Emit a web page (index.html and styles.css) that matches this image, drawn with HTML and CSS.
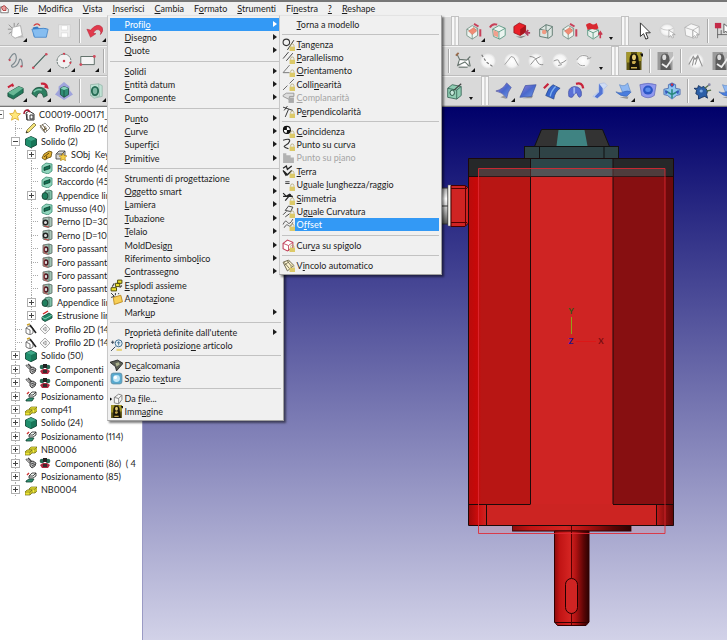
FILE: index.html
```html
<!DOCTYPE html>
<html lang="it">
<head>
    <meta charset="UTF-8">
    <meta name="viewport" content="width=device-width, initial-scale=1.0">
    <title>Modellatore</title>
    <link rel="stylesheet" href="styles.css">
</head>
<body>
    <!-- icon library -->
    <svg class="defs" aria-hidden="true">
        <defs>
            <linearGradient id="gBlue" x1="0" y1="0" x2="1" y2="1"><stop offset="0" stop-color="#9a7fd8"/><stop offset=".5" stop-color="#4a68cc"/><stop offset="1" stop-color="#6f9ce8"/></linearGradient>
            <radialGradient id="gPale"><stop offset="0" stop-color="#fff"/><stop offset=".7" stop-color="#f4f4f4"/><stop offset="1" stop-color="#d9d9d9"/></radialGradient>
        </defs>

        <!-- small icons, 12 x 12 -->
        <symbol id="app" viewBox="0 0 12 12"><path d="M1 3h6l4 3v5H1z" fill="#fff" stroke="#555"/><path d="M2 4q4-5 6 0v4H4z" fill="#e7a0a0" stroke="#a22"/></symbol>
        <symbol id="star" viewBox="0 0 12 12"><path d="M6 .8l1.6 3.5 3.9.4-2.9 2.6.9 3.9L6 9.2l-3.5 2 .9-3.9L.5 4.7l3.9-.4z" fill="#ffe77a" stroke="#d9a92c" stroke-width=".8"/></symbol>
        <symbol id="model" viewBox="0 0 12 12"><path d="M3 4l3-2 5 3v6H4z" fill="#fff" stroke="#333"/><path d="M4 5v6M7 6v4h3V6z" fill="none" stroke="#333"/><path d="M1 5Q1 1 5 1l2 2" fill="none" stroke="#a01830" stroke-width="1.5"/></symbol>
        <symbol id="pencil" viewBox="0 0 12 12"><path d="M1 11l1-3 7-7 2 2-7 7z" fill="#f4e37a" stroke="#77703a" stroke-width=".8"/><path d="M1 11l.6-2 1.4 1.4z" fill="#222"/></symbol>
        <symbol id="plane" viewBox="0 0 12 12"><path d="M1 5l5-4 5 5-5 5z" fill="#fff" stroke="#777" stroke-width=".8"/><path d="M1 3l5 7M3 2l5 7M6 4v4H4l4-2" fill="none" stroke="#6a5a3a" stroke-width=".9"/></symbol>
        <symbol id="diamond" viewBox="0 0 12 12"><path d="M1 6l5-5 5 5-5 5z" fill="#f6f6f6" stroke="#999" stroke-width=".8"/><path d="M4 6l3-2v4z" fill="none" stroke="#888" stroke-width=".8"/></symbol>
        <symbol id="wand" viewBox="0 0 12 12"><path d="M1 5l3-2 4 2v5l-3 2-4-2z" fill="#fff" stroke="#555" stroke-width=".8"/><path d="M1 5l4 2v5" fill="none" stroke="#555" stroke-width=".8"/><path d="M5 2l6 8" stroke="#222" stroke-width="1.6"/><path d="M2 2l3-1" stroke="#caa02c" stroke-width="1.4"/></symbol>
        <symbol id="solid" viewBox="0 0 12 12"><path d="M6 .5l5.500 2.500v6L6 11.700.500 9V3z" fill="#187658" stroke="#0a3d2d" stroke-width=".8"/><path d="M1 3l5 2 5-2-5-2.300z" fill="#3da888"/><path d="M6 5v6.500l-5-2.500V3z" fill="#1f8d6b"/></symbol>
        <symbol id="fillet" viewBox="0 0 12 12"><path d="M1 4l4-3 6 1v7l-4 3-6-2z" fill="#8fd6bd" stroke="#3c8a71" stroke-width=".8"/><path d="M3 8.500V5.500l6-2v3z" fill="#137556" stroke="#0b3b2b" stroke-width=".8"/></symbol>
        <symbol id="boss" viewBox="0 0 12 12"><path d="M4 2l4-1 3 1v8l-4 1-3-1z" fill="#7fbfa8" stroke="#376a58" stroke-width=".8"/><ellipse cx="4" cy="7" rx="3" ry="3.500" fill="#20805f" stroke="#17382c" stroke-width=".8"/><path d="M8 3v8" stroke="#376a58" stroke-width=".8"/></symbol>
        <symbol id="pin" viewBox="0 0 12 12"><path d="M2 2l6-1 3 1v8l-4 1.500L2 10z" fill="#a9c4b8" stroke="#56645e" stroke-width=".8"/><path d="M8 1v10" stroke="#56645e" stroke-width=".7"/><circle cx="4.500" cy="6.500" r="2.200" fill="#ddd" stroke="#222" stroke-width="1.400"/><path d="M3 10l5 1" stroke="#c33" stroke-width=".8"/></symbol>
        <symbol id="hole" viewBox="0 0 12 12"><path d="M2 2l6-1 3 1v8l-4 1.500L2 10z" fill="#9fc2b3" stroke="#56645e" stroke-width=".8"/><path d="M8 1v10" stroke="#56645e" stroke-width=".7"/><ellipse cx="5" cy="6.500" rx="1.800" ry="2.500" fill="#ddd" stroke="#4a1620" stroke-width="1.400"/><path d="M3 2v8l4 1" fill="none" stroke="#c55" stroke-width=".8"/></symbol>
        <symbol id="extrude" viewBox="0 0 12 12"><path d="M1 7l7-4 3 2v3l-7 3.500-3-2z" fill="#1f8a68" stroke="#0b3b2b" stroke-width=".8"/><path d="M1 7l3 2 7-4" fill="none" stroke="#9fe0c8" stroke-width=".8"/><path d="M2 4l5-3" stroke="#c22" stroke-width="1.400"/></symbol>
        <symbol id="gold" viewBox="0 0 12 12"><path d="M1 9l2-4 5-3 3 1-1 5-3 1-3 2z" fill="#e2b235" stroke="#5e4508" stroke-width=".8"/><path d="M3 8l5-4M5 10l1-3" stroke="#5e4508"/></symbol>
        <symbol id="smart" viewBox="0 0 12 12"><path d="M1 5l3-3h6v5l-3 3H1z" fill="#d8d8d8" stroke="#333" stroke-width=".8"/><path d="M2 5h5l3-3M7 5v4" fill="none" stroke="#333" stroke-width=".8"/><path d="M8 4l1 2.500 3 .3-2 2 .6 3L8 10.300l-2.500 1.500.6-3-2-2 3-.3z" fill="#f5d04a" stroke="#a87a10" stroke-width=".6"/></symbol>
        <symbol id="asm" viewBox="0 0 12 12"><path d="M1 2l4 4M3 1l4 4" stroke="#444" stroke-width="1.600"/><path d="M1.500 2.500l4 4" stroke="#ddd" stroke-width=".7"/><path d="M5 5l3-1 3 2-1 3-3 2-2-2z" fill="#b5b5b5" stroke="#333" stroke-width=".9"/><path d="M6 7l3-1M7 9l3-2" stroke="#333" stroke-width=".8"/></symbol>
        <symbol id="comp" viewBox="0 0 12 12"><circle cx="3" cy="4" r="2.300" fill="#2a6a55"/><circle cx="9" cy="4" r="2.300" fill="#2a6a55"/><rect x="4" y="1" width="4" height="4" fill="#222"/><path d="M1 8l3-2h4l3 2-2 3H3z" fill="#b02840"/><path d="M4 7h4v3H4z" fill="#3b2a2c"/></symbol>
        <symbol id="posit" viewBox="0 0 12 12"><path d="M4 5l3-3h4v3L8 7H4z" fill="#eef3f0" stroke="#222" stroke-width=".8"/><path d="M4 5h4l3-3" fill="none" stroke="#222" stroke-width=".8"/><path d="M1 10l3-2h5l-2 3H1z" fill="#2f9575" stroke="#113f30" stroke-width=".8"/><path d="M2 4l2-2" stroke="#c33" stroke-width="1.400"/></symbol>
        <symbol id="yellow" viewBox="0 0 12 12"><path d="M4 5l2-2h6v4l-2 2H4z" fill="#f6ee3c" stroke="#6e6a14" stroke-width=".7"/><path d="M0 8l2-2h5v3l-2 2H0z" fill="#efe634" stroke="#6e6a14" stroke-width=".7"/><path d="M4 5h6l2-2M10 5v4M0 8h5l2-2M5 8v3" fill="none" stroke="#6e6a14" stroke-width=".7"/></symbol>
        <symbol id="explode" viewBox="0 0 12 12"><path d="M1 8h5v3H1zM5 4h4v3H5zM7 1h4v3H7z" fill="#e9df2e" stroke="#4f4a0a" stroke-width=".9"/><path d="M2 7l2-3M9 8l2-2" stroke="#444"/></symbol>
        <symbol id="note" viewBox="0 0 12 12"><path d="M3 5l7-2 1.500 6L4 11.500z" fill="#f8cf56" stroke="#b8871c" stroke-width=".8"/><path d="M1 1l3 3M1 5l3-1M5 1v2M8 1v1" stroke="#333" stroke-width=".9"/></symbol>
        <symbol id="props" viewBox="0 0 12 12"><path d="M1 3h3M2.500 1.500v3M1 11l4-4" stroke="#345" stroke-width=".9"/><circle cx="8" cy="4" r="3.200" fill="#eaf4fb" stroke="#3d6d8e" stroke-width=".9"/><path d="M8 2v4M6.500 3.500h3" stroke="#3d6d8e" stroke-width=".8"/><path d="M6 9h5v2H6z" fill="#e6d27a"/></symbol>
        <symbol id="decal" viewBox="0 0 12 12"><path d="M0 3l7-2 5 3-6 7-1-4z" fill="#5c5f55" stroke="#222" stroke-width=".8"/><path d="M5 4l3-1 1 2-3 2z" fill="#aab08c"/></symbol>
        <symbol id="texture" viewBox="0 0 12 12"><rect x="1" y="1" width="10" height="10" rx="2" fill="#58a9cf" stroke="#5f8ea5" stroke-width=".8"/><circle cx="6" cy="6" r="3.200" fill="#bfe6f7"/><circle cx="5" cy="5" r="1.500" fill="#fff"/></symbol>
        <symbol id="fromfile" viewBox="0 0 12 12"><path d="M0 5l2 1.500L0 8z" fill="#000"/><path d="M4 5l4-3 3 1v4l-3 4-4-1zM4 5l4 1 3-3M8 6v5" fill="#f8f8f8" stroke="#777" stroke-width=".8"/></symbol>
        <symbol id="mona" viewBox="0 0 12 12"><path d="M1 0h10v12H1z" fill="#5d5412"/><path d="M1 0h3v7H1zM8 0h3v6H8z" fill="#a3962a"/><path d="M3 12V5q0-4 3-4t3 4l1 7z" fill="#181408"/><ellipse cx="6" cy="3.500" rx="1.300" ry="1.900" fill="#e5cc74"/><path d="M4.500 6.500q1.500-1.500 3 0l-1 1.500H5zM4 10h4v1H4z" fill="#c9ab4e"/><path d="M10 1h2v2h-1z" fill="#111"/></symbol>
        <symbol id="monag" viewBox="0 0 12 12"><path d="M1 0h10v12H1z" fill="#9a9a9a"/><path d="M8 0h3v6H8z" fill="#bcbcbc"/><path d="M3 12V5q0-4 3-4t3 4l1 7z" fill="#5c5c5c"/><ellipse cx="5.500" cy="3.500" rx="1.300" ry="1.900" fill="#ddd"/><path d="M4 8l3 2 5-7" fill="none" stroke="#ededed" stroke-width="1.200"/></symbol>

        <!-- constraint icons, 12 x 12, with the small lock -->
        <symbol id="lock" viewBox="0 0 12 12"><path d="M8 8V7q0-1.500 1.500-1.500T11 7v1" fill="none" stroke="#b6ab78" stroke-width=".8"/><rect x="7" y="8" width="5" height="4" fill="#dcc968"/></symbol>
        <symbol id="tang" viewBox="0 0 12 12"><circle cx="4" cy="4" r="3" fill="none" stroke="#333"/><path d="M5 11l6-9" stroke="#333" stroke-width=".9"/><use href="#lock"/></symbol>
        <symbol id="para" viewBox="0 0 12 12"><path d="M1 7l5-6M4 9l6-7" stroke="#444" stroke-width=".9"/><use href="#lock"/></symbol>
        <symbol id="orient" viewBox="0 0 12 12"><path d="M7 1L1 8h6" fill="none" stroke="#777" stroke-width=".9"/><use href="#lock"/></symbol>
        <symbol id="colli" viewBox="0 0 12 12"><path d="M1 11l4-4M7 5l4-4" stroke="#666" stroke-width=".9"/><use href="#lock"/></symbol>
        <symbol id="compl" viewBox="0 0 12 12"><path d="M1 4l3-2h7v3H7v3L1 5z" fill="#ddd" stroke="#999" stroke-width=".9"/><rect x="6" y="6" width="5" height="5" fill="#aaa"/></symbol>
        <symbol id="perp" viewBox="0 0 12 12"><path d="M1 2l9 3M6 4l-3 7M2 5l3-4" fill="none" stroke="#333" stroke-width=".9"/><use href="#lock"/></symbol>
        <symbol id="coin" viewBox="0 0 12 12"><circle cx="4.500" cy="4.500" r="3.200" fill="#fff" stroke="#111"/><path d="M4.500 1v7A3.500 3.500 0 0 0 8 4.500H1A3.500 3.500 0 0 1 4.500 1z" fill="#111"/><use href="#lock"/></symbol>
        <symbol id="ptcurve" viewBox="0 0 12 12"><path d="M1 2q7-2 6 1T3 7t3 3" fill="none" stroke="#333"/><use href="#lock"/></symbol>
        <symbol id="ptplane" viewBox="0 0 12 12"><path d="M1 2h3v2h4v2h3v5H1z" fill="#b2b2b2"/></symbol>
        <symbol id="ground" viewBox="0 0 12 12"><path d="M1 3l3-2 1 3 4-3M2 6l3 3 4-4M1 5l3 5" fill="none" stroke="#222" stroke-width="1.200"/><use href="#lock"/></symbol>
        <symbol id="equal" viewBox="0 0 12 12"><path d="M3 3.500h4M3 5h4" stroke="#444"/><use href="#lock"/></symbol>
        <symbol id="symm" viewBox="0 0 12 12"><path d="M1 1l3 3 3-2 3 3M3 8l5-6M1 4h9" fill="none" stroke="#222" stroke-width="1.100"/><use href="#lock"/></symbol>
        <symbol id="curv" viewBox="0 0 12 12"><path d="M3 5l3-4 4 1-2 4zM1 9l3-3M3 11l4-3" fill="none" stroke="#444" stroke-width=".9"/><use href="#lock"/></symbol>
        <symbol id="offs" viewBox="0 0 12 12"><path d="M0 0h12v12H0z" fill="#eee"/><path d="M1 6q2-5 4-2t5-3M2 9q2-4 4-2t4-3" fill="none" stroke="#555" stroke-width=".9"/><use href="#lock"/></symbol>
        <symbol id="edge" viewBox="0 0 12 12"><path d="M1 4l4-3 5 2v5l-5 3-4-2z" fill="#fff" stroke="#c0405a"/><path d="M1 4l5 2v5M6 6l4-3" fill="none" stroke="#c0405a" stroke-width=".8"/><use href="#lock"/></symbol>
        <symbol id="auto" viewBox="0 0 12 12"><path d="M1 3l5-2 5 5-6 5z" fill="#fdf4cf" stroke="#6d6850" stroke-width=".9"/><path d="M2 3l5 6M5 2l4 5M2 6l5-4" stroke="#6d6850" stroke-width=".8"/><use href="#lock"/></symbol>

        <!-- toolbar icons, 20 x 20 -->
        <symbol id="t-new" viewBox="0 0 20 20"><path d="M6 6l9-2 2 11-8 3-4-3z" fill="#fff" stroke="#999" stroke-width=".8"/><path d="M2 3l4 4M8 1v4M1 8h4M2 13l3-2M13 1l-2 3" stroke="#777" stroke-width=".8"/><path d="M8 18l9-3 2 2z" fill="#bbb"/></symbol>
        <symbol id="t-open" viewBox="0 0 20 20"><path d="M2 6l5-1 2 2h8v9H3z" fill="#2f78c4"/><path d="M1 8l13-1 5 1-2 9H4z" fill="#86bdf0" stroke="#3a7fc6" stroke-width=".8"/><path d="M3 4q4-4 7 0" fill="none" stroke="#d33a3a" stroke-width="1.300"/></symbol>
        <symbol id="t-save" viewBox="0 0 20 20"><path d="M4 3h13v14H4z" fill="#efefef" stroke="#cfcfcf"/><path d="M7 4h7v5H7zM7 12h7v5H7z" fill="#fff" stroke="#d5d5d5" stroke-width=".7"/></symbol>
        <symbol id="t-undo" viewBox="0 0 20 20"><path d="M1 8l4 9 6-4-3-1q4-6 8-2 1 2 0 4 4-4 2-8-5-6-13 3z" fill="#e23a4c" stroke="#b0263a" stroke-width=".6"/></symbol>
        <symbol id="t-curve" viewBox="0 0 20 20"><path d="M2 9q6-11 8-5T5 15q0 3 4 1t5-8q3-1 3 8" fill="none" stroke="#7e8a90" stroke-width="1.300"/><circle cx="3" cy="9" r="1.200" fill="#c54a5a"/><circle cx="16" cy="16" r="1.200" fill="#c54a5a"/></symbol>
        <symbol id="t-line" viewBox="0 0 20 20"><path d="M2 18L17 2" stroke="#3f6158" stroke-width="1.200"/><circle cx="2.500" cy="17.500" r="1.400" fill="#d04a5c"/><circle cx="17" cy="2.500" r="1.400" fill="#d04a5c"/></symbol>
        <symbol id="t-circle" viewBox="0 0 20 20"><circle cx="10" cy="10" r="7.700" fill="#f1f1f1" stroke="#5f6d6a" stroke-dasharray="3 1"/><circle cx="10" cy="10" r="1.400" fill="#d0384c"/><circle cx="10" cy="2" r="1.200" fill="#d0384c"/><circle cx="17" cy="12" r="1.200" fill="#d0384c"/></symbol>
        <symbol id="t-rect" viewBox="0 0 20 20"><path d="M2 5h15v9H2z" fill="#f4f4f4" stroke="#55655f"/><circle cx="2" cy="14" r="1.600" fill="#d04a5c"/><circle cx="17" cy="5" r="1.600" fill="#d04a5c"/></symbol>
        <symbol id="t-extr" viewBox="0 0 20 20"><path d="M1 12L13 5l5 2v5L7 19l-6-3z" fill="#24795c" stroke="#12402f" stroke-width=".8"/><path d="M1 12l6 3L18 7l-5-2z" fill="#68b795"/><path d="M1 6l5-3 1 2" fill="none" stroke="#c8233a" stroke-width="2.200"/></symbol>
        <symbol id="t-rev" viewBox="0 0 20 20"><path d="M1 13Q3 5 11 6q7 1 7 9l-4 2q-1-5-4-5t-4 5z" fill="#2d7f61" stroke="#12402f" stroke-width=".8"/><path d="M3 11q4-4 9-2" fill="none" stroke="#83ccb0" stroke-width="1.500"/><path d="M11 2q6-1 7 4l-3-1" fill="none" stroke="#c8233a" stroke-width="2.400"/></symbol>
        <symbol id="t-cube" viewBox="0 0 20 20"><path d="M10 0l6 5v4l4 5-7 4-3 2-3-2-7-4 4-5V5z" fill="#9095dc" opacity=".8"/><path d="M6 7l4-2 5 2v7l-5 3-4-3z" fill="#2f8d76" stroke="#12402f" stroke-width=".8"/><path d="M6 7l4 2 5-2-5-2z" fill="#8bd3bd"/><path d="M10 9v8" stroke="#12402f" stroke-width=".8"/></symbol>
        <symbol id="t-hole" viewBox="0 0 20 20"><path d="M5 3l9-1 4 2v12l-9 2-4-3z" fill="#bfe2d4" stroke="#8fb0a4" stroke-width=".8"/><path d="M14 2l1 14M5 15l10 1" fill="none" stroke="#8fb0a4" stroke-width=".8"/><ellipse cx="10" cy="10" rx="3.500" ry="4.500" fill="#7fb8a4" stroke="#256a52" stroke-width="2"/></symbol>
        <symbol id="t-wire" viewBox="0 0 20 20"><path d="M2 8l6-4 6 3v8l-6 4-6-4z" fill="#eef5f1" stroke="#6e8c80" stroke-width=".9"/><path d="M2 8l6 3 6-4M8 11v8" fill="none" stroke="#6e8c80" stroke-width=".9"/><path d="M4 10l6-4 3 4-5 4z" fill="#f08c74" stroke="#d0705c" stroke-width=".6"/><path d="M10 2l5 3M17 8v8" stroke="#c8405a" stroke-width="2.200"/></symbol>
        <symbol id="t-shell" viewBox="0 0 20 20"><path d="M4 8l7-4 7 3v8l-6 4-7-3z" fill="#eaf4ef" stroke="#4d8f78" stroke-width=".9"/><path d="M4 8l7 3 7-4M11 11v8" fill="none" stroke="#4d8f78" stroke-width=".9"/><path d="M5 9l5 2v6l-5-2z" fill="#f0a08e"/><path d="M1 6q3-5 8-3" fill="none" stroke="#c84058" stroke-width="2.200"/></symbol>
        <symbol id="t-red" viewBox="0 0 20 20"><path d="M1 5l6-4 7 3v7l-6 4-7-3z" fill="#ea2028" stroke="#8d1016" stroke-width=".8"/><path d="M8 8v7l6-4V4z" fill="#a8141c"/><path d="M3 16l6 2 6-3-7 1z" fill="#888"/><path d="M19 12h-5M17 9l-3 3 3 3" fill="none" stroke="#b33a5c" stroke-width="1.900"/></symbol>
        <symbol id="t-box" viewBox="0 0 20 20"><path d="M3 8l7-5 7 2v10l-4 3-10-2z" fill="#dce5e1" stroke="#4d6b60" stroke-width=".9"/><path d="M3 8l9 2 5-5M12 10v8M10 3v9" fill="none" stroke="#4d6b60" stroke-width=".9"/><circle cx="8" cy="11" r="2.500" fill="#f09a82"/></symbol>
        <symbol id="t-top" viewBox="0 0 20 20"><path d="M3 9l6-2 6 2v6l-6 4-6-4z" fill="#e9f1ed" stroke="#4d8f78" stroke-width=".9"/><path d="M3 9l6 3 6-3M9 12v6" fill="none" stroke="#4d8f78" stroke-width=".9"/><path d="M1 3q4-3 6-1t6-1l2 6q-3 2-6 1T3 9z" fill="#d92a32"/><path d="M17 18v-6M15 14l2-3 2 3" fill="none" stroke="#c83a50" stroke-width="1.800"/></symbol>
        <symbol id="t-arrow" viewBox="0 0 20 20"><path d="M6 1v15l3.500-3 2.500 6 2.500-1-2.500-6H17z" fill="#fff" stroke="#333" stroke-width="1.100"/></symbol>
        <symbol id="t-ball" viewBox="0 0 20 20"><ellipse cx="9" cy="9" rx="8" ry="7" fill="url(#gPale)" stroke="#ccc" stroke-width=".6"/><path d="M2 7q7 4 14 0" fill="none" stroke="#c6c6c6"/><path d="M11 9v8l2-2 2 3 1-1-1-3h3z" fill="#fff" stroke="#999" stroke-width=".8"/></symbol>
        <symbol id="t-gcube" viewBox="0 0 20 20"><path d="M2 6l7-4 9 3v9l-6 4-9-3z" fill="#f7f7f7" stroke="#aaa" stroke-width=".8"/><path d="M2 6l9 3 7-4M11 9v9" fill="none" stroke="#aaa" stroke-width=".8"/><path d="M11 9v8l2-2 2 3 1-1-1-3h3z" fill="#fff" stroke="#999" stroke-width=".8"/></symbol>
        <symbol id="t-flag" viewBox="0 0 20 20"><path d="M4 4v14M4 14h12M8 9v5" stroke="#555" stroke-width=".9"/><path d="M1 1h7v6H1z" fill="#c42a48"/><path d="M11 2v10l2-2 3 4V6z" fill="#fff" stroke="#444" stroke-width=".9"/></symbol>
        <symbol id="t-sketch" viewBox="0 0 20 20"><path d="M3 8q4 4 14-1l-4 9-7-1z" fill="#fff"/><path d="M2 2l3 6 8 1 4-4M5 8l-2 7 8-4 5 5M4 17h10M15 7l2 9" fill="none" stroke="#68756f" stroke-width="1.200"/><path d="M1 4l3-3" stroke="#9a6a4a" stroke-width="2"/></symbol>
        <symbol id="t-p1" viewBox="0 0 20 20"><circle cx="10" cy="10" r="9" fill="url(#gPale)"/><path d="M3 3l5 8 7 5" fill="none" stroke="#777" stroke-width="1.300" stroke-dasharray="3 2"/></symbol>
        <symbol id="t-p2" viewBox="0 0 20 20"><circle cx="10" cy="10" r="9" fill="url(#gPale)"/><path d="M2 14l7-9 3 1 5 9" fill="none" stroke="#999"/></symbol>
        <symbol id="t-p3" viewBox="0 0 20 20"><circle cx="10" cy="10" r="9" fill="url(#gPale)"/><path d="M3 5q6 0 8 5t7 4M4 14l5-6 6-3" fill="none" stroke="#888"/></symbol>
        <symbol id="t-p4" viewBox="0 0 20 20"><circle cx="10" cy="10" r="9" fill="url(#gPale)"/><path d="M3 10q6-3 6 1t8-2M8 15l4-1" fill="none" stroke="#888"/></symbol>
        <symbol id="t-p5" viewBox="0 0 20 20"><circle cx="9" cy="10" r="8" fill="url(#gPale)"/><path d="M2 9q3-6 9-5 5 1 3 3t4-1M3 12q2 4 8 3" fill="none" stroke="#999"/></symbol>
        <symbol id="t-gcut" viewBox="0 0 20 20"><circle cx="10" cy="10" r="9" fill="url(#gPale)"/><path d="M2 14l5-9 2 3 3-4 5 12M8 6L6 15M12 5L9 14" fill="none" stroke="#909090" stroke-width="1.200"/></symbol>
        <symbol id="t-gbox" viewBox="0 0 20 20"><path d="M3 7l5-4 10 2v10l-5 4-10-2z" fill="#8fccb2" stroke="#3c6a5a"/><path d="M3 7l10 2 5-4M13 9v10" fill="none" stroke="#3c6a5a"/><ellipse cx="8" cy="12" rx="2.500" ry="3" fill="#c6e8da" stroke="#1f4a3a"/><path d="M10 9l8-7" stroke="#444" stroke-width="1.400"/></symbol>
        <symbol id="t-s1" viewBox="0 0 20 20"><path d="M6 17l7 2-3-4z" fill="#999"/><path d="M1 10Q9 8 13 1l5 5q-4 5-5 12Q8 11 1 10z" fill="url(#gBlue)" stroke="#4b50a0" stroke-width=".7"/></symbol>
        <symbol id="t-s2" viewBox="0 0 20 20"><path d="M4 18h10l2-3z" fill="#999"/><path d="M7 4l12-1-5 13-13 1z" fill="url(#gBlue)" stroke="#394f9e" stroke-width=".7"/></symbol>
        <symbol id="t-s3" viewBox="0 0 20 20"><path d="M3 15Q6 6 11 3l8 4q-6 4-7 12z" fill="#3867cd" stroke="#21427f" stroke-width=".7"/><path d="M8 16q1-6 6-11" fill="none" stroke="#7fb0ee" stroke-width="1.500"/><path d="M1 7l5-5" stroke="#c8233a" stroke-width="2.500"/></symbol>
        <symbol id="t-s4" viewBox="0 0 20 20"><path d="M2 16Q0 6 8 5q9 0 8 10-2 4-4 0-1-5-4-1-2 5-6 2z" fill="#5b70d6" stroke="#3b4a9c" stroke-width=".7"/><path d="M8 6v7" stroke="#a2b8f0" stroke-width="2"/><path d="M10 2q7-2 8 5" fill="none" stroke="#c8233a" stroke-width="2.600"/></symbol>
        <symbol id="t-s5" viewBox="0 0 20 20"><path d="M9 2l6-1 3 3-4 4v4l-7 6-5-2 6-5z" fill="#cfdcf4" stroke="#a9bce4" stroke-width=".7"/><path d="M9 2l4 5v6l-6 5-3-2 5-5z" fill="#5274d4"/></symbol>
        <symbol id="t-s6" viewBox="0 0 20 20"><path d="M5 3q6 3 9-2l3 9-8 3z" fill="#8fb8f2" stroke="#5b87c8" stroke-width=".7"/><path d="M1 11q5 2 8 0 5-2 9 0l-5 5q-7 0-12-5z" fill="#4a7ddd" stroke="#3560b0" stroke-width=".6"/><path d="M5 17l9 2 1-3z" fill="#999"/></symbol>
        <symbol id="t-s7" viewBox="0 0 20 20"><path d="M1 3q9-3 18 0l-2 12q-7 5-14 0z" fill="#8f98ee" stroke="#6168b8" stroke-width=".8"/><ellipse cx="10" cy="9" rx="5.500" ry="5" fill="#2b56c6"/><ellipse cx="10" cy="8.500" rx="3" ry="2.500" fill="#5a8cec"/></symbol>
        <symbol id="t-s8" viewBox="0 0 20 20"><path d="M6 3l4-2 4 2v4l5 1v6l-4 1-5 4-5-4-4-1V8l5-1z" fill="#8fc6f0" stroke="#3a5aa6" stroke-width=".8"/><path d="M10 8v10M3 10l7 4 7-4" fill="none" stroke="#2c8a80" stroke-width="1.800"/><path d="M7 3l3 3 3-3-3-2zM2 9l4 2-3 3zM18 9l-4 2 3 3z" fill="#3a58c0"/><circle cx="10" cy="3" r="1.200" fill="#d33"/></symbol>
        <symbol id="t-s9" viewBox="0 0 20 20"><path d="M5 4l3 2 3-1 2 2 2 3-1 4 1 4-3-2-3 1-4 2v-4l-3-2 1-4-3-2 4 0z" fill="#2b5fa8" stroke="#16335f"/><path d="M12 7l5-4M14 10l5-1" stroke="#55704a" stroke-width="1.500"/><circle cx="17" cy="3" r="1.500" fill="#88a"/><circle cx="8" cy="10" r="1.800" fill="#7eabe2"/></symbol>
    </svg>

    <div class="titlebar"></div>

    <nav class="menubar">
        <svg class="app-icon"><use href="#app"/></svg>
        <ul class="menubar-list">
            <li><button><u>F</u>ile</button></li>
            <li><button><u>M</u>odifica</button></li>
            <li><button><u>V</u>ista</button></li>
            <li class="open">
                <button><u>I</u>nserisci</button>
                <div class="menu">
                    <ul class="group">
                        <li class="has-sub">
                            <button class="item sub selected">Profil<u>o</u></button>
                            <div class="menu submenu">
                                <ul class="group">
                                    <li><button class="item"><u>T</u>orna a modello</button></li>
                                </ul>
                                <ul class="group">
                                    <li><button class="item"><svg><use href="#tang"/></svg><u>T</u>angenza</button></li>
                                    <li><button class="item"><svg><use href="#para"/></svg><u>P</u>arallelismo</button></li>
                                    <li><button class="item"><svg><use href="#orient"/></svg><u>O</u>rientamento</button></li>
                                    <li><button class="item"><svg><use href="#colli"/></svg>Colli<u>n</u>earità</button></li>
                                    <li><button class="item" disabled><svg><use href="#compl"/></svg><u>C</u>omplanarità</button></li>
                                    <li><button class="item"><svg><use href="#perp"/></svg>P<u>e</u>rpendicolarità</button></li>
                                </ul>
                                <ul class="group">
                                    <li><button class="item"><svg><use href="#coin"/></svg><u>C</u>oincidenza</button></li>
                                    <li><button class="item"><svg><use href="#ptcurve"/></svg>Punto su curva</button></li>
                                    <li><button class="item" disabled><svg><use href="#ptplane"/></svg>Punto su p<u>i</u>ano</button></li>
                                    <li><button class="item"><svg><use href="#ground"/></svg><u>T</u>erra</button></li>
                                    <li><button class="item"><svg><use href="#equal"/></svg>Uguale <u>l</u>unghezza/raggio</button></li>
                                    <li><button class="item"><svg><use href="#symm"/></svg><u>S</u>immetria</button></li>
                                    <li><button class="item"><svg><use href="#curv"/></svg>Ug<u>u</u>ale Curvatura</button></li>
                                    <li><button class="item selected"><svg><use href="#offs"/></svg>O<u>f</u>fset</button></li>
                                </ul>
                                <ul class="group">
                                    <li><button class="item"><svg><use href="#edge"/></svg>Cur<u>v</u>a su spigolo</button></li>
                                </ul>
                                <ul class="group">
                                    <li><button class="item"><svg><use href="#auto"/></svg>V<u>i</u>ncolo automatico</button></li>
                                </ul>
                            </div>
                        </li>
                        <li><button class="item sub"><u>D</u>isegno</button></li>
                        <li><button class="item sub"><u>Q</u>uote</button></li>
                    </ul>
                    <ul class="group">
                        <li><button class="item sub"><u>S</u>olidi</button></li>
                        <li><button class="item sub"><u>E</u>ntità datum</button></li>
                        <li><button class="item sub"><u>C</u>omponente</button></li>
                    </ul>
                    <ul class="group">
                        <li><button class="item sub">Pu<u>n</u>to</button></li>
                        <li><button class="item sub"><u>C</u>urve</button></li>
                        <li><button class="item sub">Superf<u>i</u>ci</button></li>
                        <li><button class="item sub"><u>P</u>rimitive</button></li>
                    </ul>
                    <ul class="group">
                        <li><button class="item sub">Strumenti di pro<u>g</u>ettazione</button></li>
                        <li><button class="item sub"><u>O</u>ggetto smart</button></li>
                        <li><button class="item sub"><u>L</u>amiera</button></li>
                        <li><button class="item sub"><u>T</u>ubazione</button></li>
                        <li><button class="item sub"><u>T</u>elaio</button></li>
                        <li><button class="item sub">MoldDesig<u>n</u></button></li>
                        <li><button class="item sub">Riferimento simbo<u>l</u>ico</button></li>
                        <li><button class="item sub"><u>C</u>ontrassegno</button></li>
                        <li><button class="item"><svg><use href="#explode"/></svg><u>E</u>splodi assieme</button></li>
                        <li><button class="item"><svg><use href="#note"/></svg>Annota<u>z</u>ione</button></li>
                        <li><button class="item sub">Mark<u>u</u>p</button></li>
                    </ul>
                    <ul class="group">
                        <li><button class="item sub">P<u>r</u>oprietà definite dall'utente</button></li>
                        <li><button class="item"><svg><use href="#props"/></svg>Proprietà posizio<u>n</u>e articolo</button></li>
                    </ul>
                    <ul class="group">
                        <li><button class="item"><svg><use href="#decal"/></svg>De<u>c</u>alcomania</button></li>
                        <li><button class="item"><svg><use href="#texture"/></svg>Spazio te<u>x</u>ture</button></li>
                    </ul>
                    <ul class="group">
                        <li><button class="item"><svg><use href="#fromfile"/></svg>Da <u>f</u>ile...</button></li>
                        <li><button class="item"><svg><use href="#mona"/></svg>Imm<u>a</u>gine</button></li>
                    </ul>
                </div>
            </li>
            <li><button><u>C</u>ambia</button></li>
            <li><button>F<u>o</u>rmato</button></li>
            <li><button><u>S</u>trumenti</button></li>
            <li><button>Fi<u>n</u>estra</button></li>
            <li><button><u>?</u></button></li>
            <li><button><u>R</u>eshape</button></li>
        </ul>
    </nav>

    <div class="toolbars">
        <div class="toolbar standard">
            <div class="tools">
                <button class="tool drop"><svg><use href="#t-new"/></svg></button>
                <button class="tool"><svg><use href="#t-open"/></svg></button>
                <button class="tool"><svg><use href="#t-save"/></svg></button>
                <span class="divider"></span>
                <button class="tool drop"><svg><use href="#t-undo"/></svg></button>
            </div>
            <div class="tools right">
                <span class="grip"></span>
                <button class="tool drop"><svg><use href="#t-wire"/></svg></button>
                <button class="tool"><svg><use href="#t-shell"/></svg></button>
                <button class="tool"><svg><use href="#t-red"/></svg></button>
                <button class="tool"><svg><use href="#t-box"/></svg></button>
                <button class="tool"><svg><use href="#t-wire"/></svg></button>
                <button class="tool"><svg><use href="#t-top"/></svg></button>
                <span class="more"></span>
                <span class="grip"></span>
                <button class="tool"><svg><use href="#t-arrow"/></svg></button>
                <button class="tool"><svg><use href="#t-ball"/></svg></button>
                <button class="tool"><svg><use href="#t-gcube"/></svg></button>
                <span class="divider"></span>
                <button class="tool"><svg><use href="#t-flag"/></svg></button>
            </div>
        </div>
        <div class="toolbar sketch">
            <div class="tools">
                <button class="tool"><svg><use href="#t-curve"/></svg></button>
                <button class="tool drop"><svg><use href="#t-line"/></svg></button>
                <button class="tool drop"><svg><use href="#t-circle"/></svg></button>
                <button class="tool drop"><svg><use href="#t-rect"/></svg></button>
                <span class="divider"></span>
            </div>
            <div class="tools right">
                <span class="divider"></span>
                <button class="tool drop"><svg><use href="#t-sketch"/></svg></button>
                <button class="tool"><svg><use href="#t-p1"/></svg></button>
                <button class="tool"><svg><use href="#t-p2"/></svg></button>
                <button class="tool"><svg><use href="#t-p3"/></svg></button>
                <button class="tool"><svg><use href="#t-p4"/></svg></button>
                <button class="tool"><svg><use href="#t-p5"/></svg></button>
                <span class="more"></span>
                <span class="grip"></span>
                <button class="tool"><svg><use href="#mona"/></svg></button>
                <span class="divider"></span>
                <button class="tool"><svg><use href="#monag"/></svg></button>
                <span class="divider"></span>
                <button class="tool"><svg><use href="#t-gcut"/></svg></button>
                <button class="tool"><svg><use href="#monag"/></svg></button>
            </div>
        </div>
        <div class="toolbar surfaces">
            <div class="tools">
                <button class="tool drop"><svg><use href="#t-extr"/></svg></button>
                <button class="tool drop"><svg><use href="#t-rev"/></svg></button>
                <button class="tool"><svg><use href="#t-cube"/></svg></button>
                <span class="divider"></span>
                <button class="tool drop"><svg><use href="#t-hole"/></svg></button>
            </div>
            <div class="tools right">
                <button class="tool"><svg><use href="#t-gbox"/></svg></button>
                <span class="more"></span>
                <span class="grip"></span>
                <button class="tool drop"><svg><use href="#t-s1"/></svg></button>
                <button class="tool"><svg><use href="#t-s2"/></svg></button>
                <button class="tool"><svg><use href="#t-s3"/></svg></button>
                <button class="tool"><svg><use href="#t-s4"/></svg></button>
                <button class="tool"><svg><use href="#t-s5"/></svg></button>
                <button class="tool drop"><svg><use href="#t-s6"/></svg></button>
                <button class="tool"><svg><use href="#t-s7"/></svg></button>
                <button class="tool"><svg><use href="#t-s8"/></svg></button>
                <span class="divider"></span>
                <button class="tool drop"><svg><use href="#t-s9"/></svg></button>
                <button class="tool"><svg><use href="#t-s6"/></svg></button>
            </div>
        </div>
    </div>

    <main class="workspace">
        <ul class="tree">
            <li class="root"><button class="toggle minus"></button><svg><use href="#star"/></svg><svg><use href="#model"/></svg><span>C00019-000171_0</span></li>
            <li class="lvl1"><i class="leaf"></i><svg><use href="#pencil"/></svg><svg><use href="#plane"/></svg><span>Profilo 2D (16</span></li>
            <li class="lvl1"><button class="toggle minus"></button><svg><use href="#solid"/></svg><span>Solido (2)</span></li>
            <li class="lvl2"><button class="toggle"></button><svg><use href="#gold"/></svg><svg><use href="#smart"/></svg><span>SObj&nbsp; Key</span></li>
            <li class="lvl2"><i class="leaf"></i><svg><use href="#fillet"/></svg><span>Raccordo (46</span></li>
            <li class="lvl2"><i class="leaf"></i><svg><use href="#fillet"/></svg><span>Raccordo (45</span></li>
            <li class="lvl2"><button class="toggle"></button><svg><use href="#boss"/></svg><span>Appendice lin</span></li>
            <li class="lvl2"><i class="leaf"></i><svg><use href="#fillet"/></svg><span>Smusso (40)</span></li>
            <li class="lvl2"><i class="leaf"></i><svg><use href="#pin"/></svg><span>Perno [D=30,</span></li>
            <li class="lvl2"><i class="leaf"></i><svg><use href="#pin"/></svg><span>Perno [D=100</span></li>
            <li class="lvl2"><i class="leaf"></i><svg><use href="#hole"/></svg><span>Foro passante</span></li>
            <li class="lvl2"><i class="leaf"></i><svg><use href="#hole"/></svg><span>Foro passante</span></li>
            <li class="lvl2"><i class="leaf"></i><svg><use href="#hole"/></svg><span>Foro passante</span></li>
            <li class="lvl2"><i class="leaf"></i><svg><use href="#hole"/></svg><span>Foro passante</span></li>
            <li class="lvl2"><button class="toggle"></button><svg><use href="#boss"/></svg><span>Appendice lin</span></li>
            <li class="lvl2"><button class="toggle"></button><svg><use href="#extrude"/></svg><span>Estrusione lin</span></li>
            <li class="lvl1"><i class="leaf"></i><svg><use href="#wand"/></svg><svg><use href="#diamond"/></svg><span>Profilo 2D (14</span></li>
            <li class="lvl1"><i class="leaf"></i><svg><use href="#wand"/></svg><svg><use href="#diamond"/></svg><span>Profilo 2D (14</span></li>
            <li class="lvl1"><button class="toggle"></button><svg><use href="#solid"/></svg><span>Solido (50)</span></li>
            <li class="lvl1"><button class="toggle"></button><svg><use href="#asm"/></svg><svg><use href="#comp"/></svg><span>Componenti</span></li>
            <li class="lvl1"><button class="toggle"></button><svg><use href="#asm"/></svg><svg><use href="#comp"/></svg><span>Componenti</span></li>
            <li class="lvl1"><button class="toggle"></button><svg><use href="#posit"/></svg><span>Posizionamento</span></li>
            <li class="lvl1"><button class="toggle"></button><svg><use href="#yellow"/></svg><span>comp41</span></li>
            <li class="lvl1"><button class="toggle"></button><svg><use href="#solid"/></svg><span>Solido (24)</span></li>
            <li class="lvl1"><button class="toggle"></button><svg><use href="#posit"/></svg><span>Posizionamento (114)</span></li>
            <li class="lvl1"><button class="toggle"></button><svg><use href="#yellow"/></svg><span>NB0006</span></li>
            <li class="lvl1"><button class="toggle"></button><svg><use href="#asm"/></svg><svg><use href="#comp"/></svg><span>Componenti (86)&nbsp; ( 4</span></li>
            <li class="lvl1"><button class="toggle"></button><svg><use href="#posit"/></svg><span>Posizionamento (85)</span></li>
            <li class="lvl1"><button class="toggle"></button><svg><use href="#yellow"/></svg><span>NB0004</span></li>
        </ul>

        <div class="viewport">
            <svg class="scene" viewBox="143 107 584 533" preserveAspectRatio="xMidYMid slice">
                <defs>
                    <linearGradient id="shaft"><stop offset="0" stop-color="#8e0b0b"/><stop offset=".15" stop-color="#c11414"/><stop offset=".45" stop-color="#d42422"/><stop offset=".62" stop-color="#b01212"/><stop offset=".85" stop-color="#5a0505"/><stop offset="1" stop-color="#2c0202"/></linearGradient>
                    <linearGradient id="cornerL"><stop offset="0" stop-color="#a00a0a"/><stop offset=".5" stop-color="#cc0c0c"/><stop offset="1" stop-color="#cf2423"/></linearGradient>
                    <linearGradient id="cornerR"><stop offset="0" stop-color="#c01a1a"/><stop offset="1" stop-color="#5c0505"/></linearGradient>
                    <linearGradient id="sideL"><stop offset="0" stop-color="#b90c0c"/><stop offset=".12" stop-color="#c80808"/><stop offset=".2" stop-color="#b81614"/><stop offset="1" stop-color="#b81614"/></linearGradient>
                    <linearGradient id="steel" x1="0" y1="0" x2="0" y2="1"><stop offset="0" stop-color="#aaa"/><stop offset=".3" stop-color="#fff"/><stop offset=".6" stop-color="#bbb"/><stop offset="1" stop-color="#555"/></linearGradient>
                </defs>

                <!-- cable gland -->
                <rect x="436" y="188" width="12" height="36" fill="url(#steel)" stroke="#333"/>
                <path d="M440 206h8" stroke="#333"/>
                <rect x="448" y="185" width="3" height="41" fill="#f3f0ea" stroke="#555" stroke-width=".5"/>
                <path d="M451 185.500h14l4 3v34l-4 4h-14z" fill="#cf2423" stroke="#400"/>
                <path d="M451 188.500h16M451 222.500h16M465.500 186v40" fill="none" stroke="#500"/>

                <!-- top cap -->
                <path d="M534.500 146.500l7-17h61l7 17z" fill="#333" stroke="#111"/>
                <path d="M556.500 146l2-16h26l3 16z" fill="#3f8382"/>
                <rect x="524.500" y="146.500" width="94" height="12" fill="#2f4346" stroke="#111"/>
                <path d="M539.500 147v11M604 147v11" stroke="#111"/>
                <rect x="469" y="158.500" width="204.500" height="18" fill="#262829"/>
                <rect x="530.500" y="158.500" width="82.500" height="18" fill="#2c4548"/>

                <!-- housing -->
                <rect x="469" y="176.500" width="62" height="328" fill="url(#sideL)"/>
                <rect x="530.500" y="176.500" width="82.500" height="328" fill="#cf2423"/>
                <rect x="613" y="176.500" width="60.500" height="328" fill="#870f11"/>
                <rect x="665" y="176.500" width="8.500" height="328" fill="#6e0a0c"/>
                <rect x="469" y="504" width="204.500" height="21.500" fill="#cc2422"/>
                <rect x="469" y="504" width="17.500" height="21.500" fill="url(#cornerL)"/>
                <rect x="656.500" y="504" width="17" height="21.500" fill="url(#cornerR)"/>
                <rect x="512.500" y="525.500" width="118.500" height="5.500" fill="url(#shaft)" stroke="#300"/>

                <!-- output shaft -->
                <path d="M554.500 531v91l3 3.500h28.500l3-3.500v-91z" fill="url(#shaft)" stroke="#300"/>
                <path d="M554.500 622.500h34.500" stroke="#300"/>
                <path d="M571.500 525v53M571.500 613v12" stroke="#500"/>
                <rect x="565.500" y="578.500" width="12" height="35" rx="6" fill="#cf2423" stroke="#200"/>

                <path d="M468.500 158.500h205v367h-205zM468.500 176.500h205M530.500 158.500v345.500M613 158.500v345.500M468.500 504.500h62M613 504.500h60.500M486.500 504.500v21M656.500 504.500v21" fill="none" stroke="#1c0a0a"/>

                <!-- section box -->
                <path d="M478.500 168.500h186.500v8h-186.500zM478.500 526h34v7h-34zM631 526h34v7h-34z" fill="#f08a8a" fill-opacity=".2"/>
                <path d="M478.500 168.500h186.500v365h-186.500z" fill="none" stroke="#e02832" stroke-opacity=".85"/>

                <!-- axes -->
                <path d="M571.500 317v17" stroke="#94a01a"/>
                <path d="M576 341.500h20" stroke="#dc1616"/>
                <text class="axis axis-y" x="571" y="314">Y</text>
                <text class="axis axis-z" x="571" y="344">Z</text>
                <text class="axis axis-x" x="601" y="344">X</text>
            </svg>
        </div>
    </main>
</body>
</html>
```
FILE: styles.css
```css
* {
    box-sizing: border-box;
}

body {
    display: flex;
    flex-direction: column;
    height: 100vh;
    margin: 0;
    overflow: hidden;
    background-color: #d9d9d9;
    color: #1c1c1c;
    font-family: Lato, "Open Sans", sans-serif;
    font-size: 9px;
    font-variant-ligatures: none;
    font-variant-numeric: proportional-nums;
    line-height: 13px;
}

ul {
    list-style: none;
    margin: 0;
    padding: 0;
}

button {
    padding: 0;
    border: none;
    background: none;
    color: inherit;
    font: inherit;
    font-variant-ligatures: none;
    text-align: left;
    white-space: nowrap;
}

svg {
    display: block;
    flex: none;
}

u {
    text-underline-offset: 1px;
}

.defs {
    position: absolute;
    width: 0;
    height: 0;
}

/* menu bar */
.titlebar {
    flex: none;
    height: 2px;
    background-color: #777;
}

.menubar {
    display: flex;
    flex: none;
    align-items: center;
    height: 14px;
    padding-bottom: 1px;
    background-color: #f0f0f0;
}

.app-icon {
    width: 9px;
    height: 12px;
}

.menubar-list {
    display: flex;
}

.menubar-list > li {
    padding: 0 5px;
}

.open {
    position: relative;
}

/* drop-down menus */
.menu {
    position: absolute;
    z-index: 10;
    top: 13px;
    left: -1px;
    width: 177px;
    padding: 2px;
    background-color: #f0f0f0;
    border: 1px solid #a0a0a0;
    border-top-color: #e3e3e3;
    border-left-color: #c8c8c8;
    box-shadow: 2px 2px 2px rgba(0, 0, 0, 0.5);
}

.submenu {
    top: -3px;
    left: 169px;
    width: 163px;
}

.group {
    display: grid;
    grid-auto-rows: 13px 13px 14px 13px 14px;
}

.group + .group {
    margin-top: 3px;
    padding-top: 3px;
    border-top: 1px solid #c2c2c2;
}

.has-sub {
    position: relative;
}

.item {
    position: relative;
    display: block;
    width: 100%;
    height: 13px;
    padding-left: 15px;
}

.item svg {
    position: absolute;
    top: 0;
    left: 0;
    width: 13px;
    height: 13px;
}

.item.selected {
    background-color: #3399f5;
    color: #fff;
}

.item:disabled {
    color: #a5a5a5;
}

.sub::after {
    content: "";
    position: absolute;
    top: 3px;
    right: 4px;
    border: 3px solid transparent;
    border-left: 4px solid currentColor;
    border-right: none;
}

/* toolbars */
.toolbars {
    flex: none;
    overflow: hidden;
}

.toolbar {
    display: flex;
    justify-content: space-between;
    height: 30px;
    background-color: #d9d9d9;
    border-top: 1px solid #f4f4f4;
    border-bottom: 1px solid #bdbdbd;
}

.tools {
    display: flex;
    flex: none;
    align-items: center;
    gap: 5px;
    padding-left: 7px;
}

/* the bars run on past the window edge */
.standard .right {
    margin-right: -6px;
}

.sketch .right {
    margin-right: -3px;
}

.surfaces .right {
    margin-right: -10px;
}

.tool {
    position: relative;
    width: 19px;
    height: 19px;
}

.tool svg {
    width: 18px;
    height: 18px;
}

.drop::after {
    content: "";
    position: absolute;
    right: -1px;
    bottom: -1px;
    border-bottom: 4px solid #111;
    border-left: 4px solid transparent;
}

.divider {
    width: 2px;
    height: 24px;
    background-color: #fafafa;
    border-left: 1px solid #aaa;
}

.grip {
    width: 6px;
    height: 28px;
    margin: 0 2px 0 4px;
    border: solid #f8f8f8;
    border-width: 0 2px;
    outline: 1px solid #c2c2c2;
}

.more {
    align-self: flex-end;
    width: 4px;
    margin-bottom: 5px;
    border: 2px solid transparent;
    border-top: 3px solid #111;
    border-bottom: none;
}

/* model tree */
.workspace {
    display: flex;
    flex: 1;
    min-height: 0;
    border-top: 1px solid #777;
}

.tree {
    display: grid;
    flex: 0 0 143px;
    grid-auto-rows: 13px 14px 13px 13px 14px;
    align-content: start;
    overflow: hidden;
    padding-top: 1px;
    background-color: #fff;
    border-right: 1px solid #9a9ac4;
}

.tree li {
    display: flex;
    align-items: center;
    gap: 2px;
    white-space: nowrap;
}

.tree svg {
    width: 12px;
    height: 12px;
}

.tree span {
    margin-left: 2px;
}

.tree .root {
    margin-left: -5px;
}

.lvl1 {
    padding-left: 11px;
    background: repeating-linear-gradient(#aaa 0 1px, transparent 1px 2px) 15px 0 / 1px 100% no-repeat;
}

.lvl2 {
    padding-left: 27px;
    background:
        repeating-linear-gradient(#aaa 0 1px, transparent 1px 2px) 15px 0 / 1px 100% no-repeat,
        repeating-linear-gradient(#aaa 0 1px, transparent 1px 2px) 31px 0 / 1px 100% no-repeat;
}

.toggle {
    width: 9px;
    height: 9px;
    margin-right: 3px;
    background:
        linear-gradient(#444, #444) 50% 50% / 5px 1px no-repeat,
        linear-gradient(#444, #444) 50% 50% / 1px 5px no-repeat,
        #fff;
    border: 1px solid #b0b0b0;
}

.toggle.minus {
    background: linear-gradient(#444, #444) 50% 50% / 5px 1px no-repeat, #fff;
}

.leaf {
    width: 7px;
    margin: 0 1px 0 4px;
    border-top: 1px dotted #aaa;
}

/* 3D view */
.viewport {
    flex: 1;
    min-width: 0;
    background: linear-gradient(#00006a, #d2d2e8);
}

.scene {
    width: 100%;
    height: 100%;
}

.axis {
    font-size: 8px;
    font-weight: bold;
    text-anchor: middle;
}

.axis-x {
    fill: #7a0c10;
}

.axis-y {
    fill: #2c5a14;
}

.axis-z {
    fill: #1a129a;
}
```
